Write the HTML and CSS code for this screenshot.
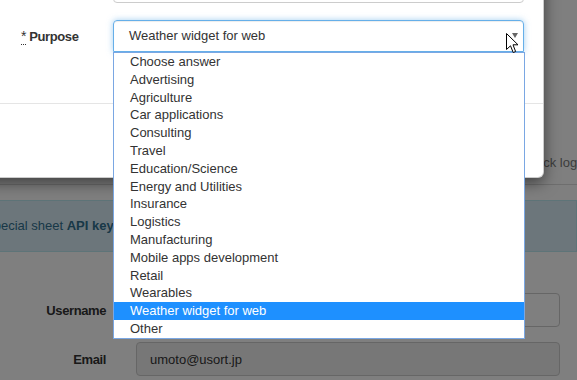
FILE: index.html
```html
<!DOCTYPE html>
<html lang="en">

<head>
  <meta charset="UTF-8">
  <meta name="viewport" content="width=device-width, initial-scale=1.0">
  <title>Widget registration</title>

  <link rel="stylesheet" href="styles.css">
</head>

<body>
  <div class="page">
    <header class="topbar">
      <a class="topbar-link">Quick login</a>
    </header>

    <div class="alert">Special sheet <b>API key</b></div>

    <form class="account-form">
      <div class="form-row">
        <label>Username</label>
        <input class="field">
      </div>
      <div class="form-row">
        <label>Email</label>
        <input class="field" value="umoto@usort.jp" disabled>
      </div>
    </form>
  </div>

  <div class="backdrop"></div>

  <div class="modal">
    <div class="modal-body">
      <div class="modal-row">
        <label class="modal-label"></label>
        <div class="modal-input"></div>
      </div>
      <div class="modal-row">
        <label class="modal-label"><abbr title="required">*</abbr> Purpose</label>
        <div class="select">
          <span>Weather widget for web</span>
          <span class="caret"></span>
          <ul class="options">
            <li>Choose answer</li>
            <li>Advertising</li>
            <li>Agriculture</li>
            <li>Car applications</li>
            <li>Consulting</li>
            <li>Travel</li>
            <li>Education/Science</li>
            <li>Energy and Utilities</li>
            <li>Insurance</li>
            <li>Logistics</li>
            <li>Manufacturing</li>
            <li>Mobile apps development</li>
            <li>Retail</li>
            <li>Wearables</li>
            <li class="selected">Weather widget for web</li>
            <li>Other</li>
          </ul>
        </div>
      </div>
    </div>
    <div class="modal-footer"></div>
  </div>

  <svg class="pointer" width="13" height="21" viewBox="0 0 13 21">
    <path d="M0.5 0.5 L0.5 16.5 L4.5 12.8 L7.2 19.5 L9.6 18.5 L7 11.8 L12 11.8 Z" fill="#fff" stroke="#000" stroke-width="1" stroke-linejoin="miter" />
  </svg>
</body>

</html>
```

FILE: styles.css
```css
body {
  background: #fff;
  color: #333;
  font-family: "Liberation Sans", Arial, sans-serif;
  font-size: 13px;
  height: 380px;
  margin: 0;
  overflow: hidden;
  position: relative;
}

.topbar {
  align-items: flex-end;
  border-bottom: 1px solid #ddd;
  box-sizing: border-box;
  display: flex;
  height: 185px;
  padding: 0 0 12px 523px;
}

.topbar-link {
  color: #7a7a7a;
  line-height: 18px;
  white-space: nowrap;
}

.alert {
  background: #d9edf7;
  border: 1px solid #bce8f1;
  color: #31708f;
  line-height: 20px;
  margin: 15px 0 0 -31px;
  padding: 15px;
  white-space: nowrap;
}

.account-form {
  margin-top: 41px;
}

.form-row {
  align-items: center;
  display: flex;
  margin-bottom: 15px;
}

.form-row label {
  font-weight: bold;
  letter-spacing: -0.4px;
  margin-right: 30px;
  text-align: right;
  width: 106px;
}

.field {
  background: #fff;
  border: 1px solid #ccc;
  border-radius: 4px;
  box-sizing: border-box;
  color: #333;
  font-family: inherit;
  font-size: 13px;
  height: 34px;
  padding: 0 13px;
  width: 424px;
}

.field:disabled {
  background: #eee;
}

.backdrop {
  background: rgba(0, 0, 0, 0.5);
  inset: 0;
  position: absolute;
}

/* dialog */

.modal {
  background: #fff;
  border: 1px solid rgba(0, 0, 0, 0.2);
  border-radius: 6px;
  box-shadow: 0 5px 15px rgba(0, 0, 0, 0.5);
  box-sizing: border-box;
  left: -20px;
  position: absolute;
  top: -49px;
  width: 564px;
}

.modal-body {
  display: flex;
  flex-direction: column;
  gap: 17px;
  padding: 15px 0 51px 40px;
}

.modal-row {
  align-items: center;
  display: flex;
}

.modal-label {
  font-weight: bold;
  letter-spacing: -0.4px;
  width: 92px;
}

.modal-label abbr {
  border-bottom: 1px dotted #333;
  font-size: 14px;
  font-weight: normal;
  text-decoration: none;
}

.modal-input {
  border: 1px solid #ccc;
  border-radius: 4px;
  height: 34px;
  width: 409px;
}

.select {
  border: 1px solid #66afe9;
  border-radius: 4px 4px 0 0;
  box-shadow: inset 0 1px 1px rgba(0, 0, 0, 0.075), 0 0 6px rgba(102, 175, 233, 0.6);
  box-sizing: border-box;
  height: 32px;
  line-height: 30px;
  padding-left: 15px;
  position: relative;
  width: 411px;
}

.caret {
  border-left: 3.5px solid transparent;
  border-right: 3.5px solid transparent;
  border-top: 5px solid #666;
  position: absolute;
  right: 5px;
  top: 12px;
}

.options {
  background: #fff;
  border: 1px solid #7aa7e3;
  box-sizing: border-box;
  left: -1px;
  list-style: none;
  margin: 0;
  padding: 0;
  position: absolute;
  top: 31px;
  width: 412px;
  z-index: 2;
}

.options li {
  color: #333;
  line-height: 17.8px;
  padding-left: 16px;
}

.options .selected {
  background: #1e90ff;
  color: #fff;
}

.modal-footer {
  border-top: 1px solid #e5e5e5;
  height: 73px;
}

.pointer {
  left: 506px;
  position: absolute;
  top: 33px;
  z-index: 3;
}
```
